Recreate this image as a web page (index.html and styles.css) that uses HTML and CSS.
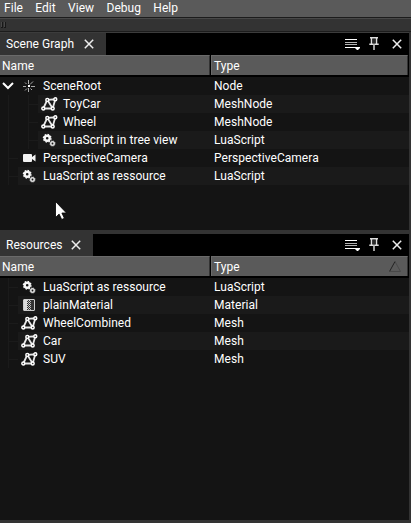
FILE: index.html
```html
<!DOCTYPE html>
<html lang="en">
<head>
<meta charset="utf-8">
<title>Scene editor</title>
<link rel="stylesheet" href="styles.css">
</head>
<body>
<svg class="defs" aria-hidden="true">
  <symbol id="node" viewBox="0 0 18 16"><path d="M7.500 2v4M7.500 10v4M2 8.500h3M10 8.500h4M9 6.500l3-3M6 10.500l-2 2M4 4.500l1.500 1.500M9.500 10.500l1.500 1.500" stroke="#aaa" fill="none"/><path d="M7 7h2v2H7z" fill="#fff"/></symbol>
  <symbol id="mesh" viewBox="0 0 18 16"><path d="M2.300 12.500L6.300 3.800L14.300 3.300L11.700 12.500zM6.300 3.800L11.700 12.500" stroke="#e8e8e8" stroke-width="1.800" fill="none"/><g fill="#444" stroke="#fff" stroke-width="1.400"><circle cx="2.300" cy="12.500" r="1.500"/><circle cx="6.300" cy="3.900" r="1.500"/><circle cx="14.300" cy="3.300" r="1.500"/><circle cx="11.700" cy="12.500" r="1.500"/></g></symbol>
  <symbol id="gears" viewBox="0 0 18 16"><g fill="none" stroke="#f8f8f8"><circle cx="6.200" cy="6.200" r="2.500" stroke-width="2.400"/><circle cx="6.200" cy="6.200" r="3.800" stroke-width="1.300" stroke-dasharray="1.490 1.490"/></g><g fill="none" stroke="#ddd"><circle cx="11.500" cy="11.500" r="1.700" stroke-width="1.600"/><circle cx="11.500" cy="11.500" r="2.600" stroke-width=".8" stroke-dasharray="1.020 1.020"/></g></symbol>
  <symbol id="camera" viewBox="0 0 18 16"><path d="M3 4h7q1 0 1 1v2l3.500-2.500v7L11 9v2q0 1-1 1H3q-1 0-1-1V5q0-1 1-1z" fill="#f2f2f2"/></symbol>
  <symbol id="material" viewBox="0 0 18 16"><rect x="2.500" y="2.500" width="11" height="11" rx=".5" fill="#333" stroke="#ccc"/><path d="M3 3h3v10H3z" fill="#ddd"/><path d="M6.500 3v10M8.500 3v10" stroke="#ddd" stroke-dasharray="1 1"/><path d="M7.500 4v9M9.500 4v9" stroke="#bbb" stroke-dasharray="1 1"/></symbol>
  <symbol id="close" viewBox="0 0 10 10"><path d="M.8.800l8.400 8.400M9.200.800L.8 9.200" stroke="#eee" stroke-width="1.500"/></symbol>
  <symbol id="list" viewBox="0 0 15 12"><path d="M0 1.500h12M0 9.500h12" stroke="#fff"/><path d="M0 4.500h12M0 6.500h12" stroke="#b4b4b4" stroke-width="1.200"/><path d="M10 9h5v1l-2 2h-1l-2-2z" fill="#fff"/></symbol>
  <symbol id="pin" viewBox="0 0 10 14"><path d="M1 .8h8M2.500 1v5.500M7.500 1v5.500M.300 7.200h9.400" stroke="#ddd" stroke-width="1.500"/><path d="M5 7v6" stroke="#bbb" stroke-width="1.700"/><path d="M5 2v5" stroke="#555"/></symbol>
</svg>

<nav class="menu"><span>File</span><span>Edit</span><span>View</span><span>Debug</span><span>Help</span></nav>
<div class="toolbar"><i></i><i></i></div>

<section class="dock scene">
  <header class="bar">
    <div class="tab">Scene Graph<svg><use href="#close"/></svg></div>
    <div class="tools"><svg class="list"><use href="#list"/></svg><svg class="pin"><use href="#pin"/></svg><svg class="x"><use href="#close"/></svg></div>
  </header>
  <div class="columns"><div>Name</div><div>Type</div></div>
  <div class="rows">
    <div class="row root"><div class="branch"><svg class="chevron" viewBox="0 0 12 8"><path d="M1 1l5 5 5-5" fill="none" stroke="#fff" stroke-width="2"/></svg></div><div class="name"><svg><use href="#node"/></svg>SceneRoot</div><div class="type">Node</div></div>
    <div class="row child"><div class="branch"></div><div class="name"><svg><use href="#mesh"/></svg>ToyCar</div><div class="type">MeshNode</div></div>
    <div class="row child"><div class="branch"></div><div class="name"><svg><use href="#mesh"/></svg>Wheel</div><div class="type">MeshNode</div></div>
    <div class="row child"><div class="branch"></div><div class="name"><svg><use href="#gears"/></svg>LuaScript in tree view</div><div class="type">LuaScript</div></div>
    <div class="row"><div class="branch"></div><div class="name"><svg><use href="#camera"/></svg>PerspectiveCamera</div><div class="type">PerspectiveCamera</div></div>
    <div class="row"><div class="branch"></div><div class="name"><svg><use href="#gears"/></svg>LuaScript as ressource</div><div class="type">LuaScript</div></div>
  </div>
</section>

<section class="dock resources">
  <header class="bar">
    <div class="tab">Resources<svg><use href="#close"/></svg></div>
    <div class="tools"><svg class="list"><use href="#list"/></svg><svg class="pin"><use href="#pin"/></svg><svg class="x"><use href="#close"/></svg></div>
  </header>
  <div class="columns"><div>Name</div><div>Type<svg class="sort" viewBox="0 0 12 11"><path d="M6 .5L.5 10.500" stroke="#222"/><path d="M6 .5l5.500 10H.5" fill="none" stroke="#484848"/></svg></div></div>
  <div class="rows">
    <div class="row"><div class="branch"></div><div class="name"><svg><use href="#gears"/></svg>LuaScript as ressource</div><div class="type">LuaScript</div></div>
    <div class="row"><div class="branch"></div><div class="name"><svg><use href="#material"/></svg>plainMaterial</div><div class="type">Material</div></div>
    <div class="row"><div class="branch"></div><div class="name"><svg><use href="#mesh"/></svg>WheelCombined</div><div class="type">Mesh</div></div>
    <div class="row"><div class="branch"></div><div class="name"><svg><use href="#mesh"/></svg>Car</div><div class="type">Mesh</div></div>
    <div class="row"><div class="branch"></div><div class="name"><svg><use href="#mesh"/></svg>SUV</div><div class="type">Mesh</div></div>
  </div>
</section>
<svg class="cursor" viewBox="0 0 12 19"><path d="M.5.5v16l3.600-3.400 2.600 5.400 2.700-1.200-2.500-5.300h4.600z" fill="#fff" stroke="#000" stroke-width=".8"/></svg>
</body>
</html>
```
FILE: styles.css
```css
* { box-sizing: border-box; }
body {
  margin: 0;
  width: 411px;
  height: 523px;
  overflow: hidden;
  display: flex;
  flex-direction: column;
  background: #333;
  color: #fff;
  font: 12px/18px Roboto, sans-serif;
  letter-spacing: .04px;
  white-space: nowrap;
}
svg { display: block; flex: none; }
.defs { position: absolute; width: 0; height: 0; }
.menu {
  display: flex;
  gap: 12.3px;
  height: 18px;
  padding-left: 4px;
  line-height: 16px;
  background: #5a5a5a;
  border-bottom: 1px solid #1c1c1c;
}
.toolbar {
  display: flex;
  gap: 1px;
  height: 14px;
  padding: 3px 0 0 1px;
  border-top: 1px solid #484848;
  border-bottom: 1px solid #1c1c1c;
}
.toolbar i { width: 2px; height: 6px; border: solid #181818; border-width: 0 1px 1px 0; background: #484848; }
.dock { width: 409px; display: flex; flex-direction: column; background: #141414; }
.scene { height: 198px; border-top: 1px solid #3c3c3c; }
.resources { height: 286px; margin-top: 4px; }
.bar { display: flex; justify-content: space-between; height: 22px; background: #000; }
.tab { display: flex; align-items: center; justify-content: space-between; width: 106px; padding: 0 12px 0 6px; background: #333; }
.resources .tab { width: 93px; }
.tab svg { width: 10px; height: 10px; }
.tools { display: flex; align-items: center; padding-right: 7px; }
.list { width: 15px; height: 12px; margin-right: 9px; }
.pin { width: 10px; height: 14px; margin-right: 13px; }
.x { width: 10px; height: 10px; }
.columns { display: flex; height: 22px; padding-right: 1px; background: #000; border-bottom: 1px solid #000; }
.columns div {
  display: flex;
  align-items: center;
  justify-content: space-between;
  width: 210px;
  height: 20px;
  padding: 0 6px 0 2px;
  background: #5a5a5a;
  border-top: 1px solid #6a6a6a;
  border-right: 1px solid #333;
}
.columns div + div { width: 197px; margin-left: 1px; padding-left: 2px; border-left: 1px solid #6a6a6a; }
.sort { width: 12px; height: 11px; }
.row { display: flex; height: 18px; background: #141414; }
.branch {
  width: 18px;
  background:
    linear-gradient(#1b1b1b, #1b1b1b) 8px 0 / 1px 100% no-repeat,
    linear-gradient(#1b1b1b, #1b1b1b) 8px 9px / 10px 1px no-repeat;
}
.root .branch { display: flex; align-items: center; padding-left: 2px; background: none; }
.child .branch {
  width: 38px;
  background:
    linear-gradient(#1b1b1b, #1b1b1b) 8px 0 / 1px 100% no-repeat,
    linear-gradient(#1b1b1b, #1b1b1b) 28px 0 / 1px 100% no-repeat,
    linear-gradient(#1b1b1b, #1b1b1b) 28px 9px / 10px 1px no-repeat;
}
.name { display: flex; align-items: center; gap: 4px; flex: 1; padding-left: 3px; }
.name svg { width: 18px; height: 16px; }
.type { width: 199px; padding-left: 4px; }
.row:nth-child(even) .name, .row:nth-child(even) .type { background: #1a1a1a; }
.chevron { width: 12px; height: 8px; }
.cursor { position: absolute; left: 55px; top: 201px; width: 12px; height: 19px; }
```
